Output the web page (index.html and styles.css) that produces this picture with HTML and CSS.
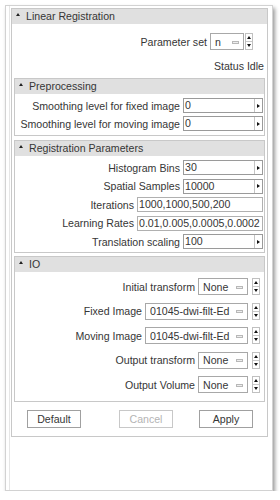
FILE: index.html
```html
<!DOCTYPE html>
<html>
<head>
<meta charset="utf-8">
<link rel="stylesheet" href="styles.css">
</head>
<body>
<div class="window">
  <div class="frame">
    <div class="head"><span class="caret"></span>Linear Registration</div>
    <div class="frame-body">
      <div class="param-row">
        <span class="label">Parameter set</span>
        <div class="combo combo-n"><span class="ctext">n</span><span class="dash"></span></div>
        <div class="spin"><span class="up"></span><span class="down"></span></div>
      </div>
      <div class="status">Status Idle</div>

      <div class="section">
        <div class="head"><span class="caret"></span>Preprocessing</div>
        <div class="sbody pre">
          <div class="row"><span class="label">Smoothing level for fixed image</span><div class="field"><span class="ftext">0</span><span class="fbtn"><i></i></span></div></div>
          <div class="row"><span class="label">Smoothing level for moving image</span><div class="field"><span class="ftext">0</span><span class="fbtn"><i></i></span></div></div>
        </div>
      </div>

      <div class="section reg-sec">
        <div class="head"><span class="caret"></span>Registration Parameters</div>
        <div class="sbody reg">
          <div class="row"><span class="label">Histogram Bins</span><div class="field"><span class="ftext">30</span><span class="fbtn"><i></i></span></div></div>
          <div class="row"><span class="label">Spatial Samples</span><div class="field"><span class="ftext">10000</span><span class="fbtn"><i></i></span></div></div>
          <div class="row"><span class="label">Iterations</span><div class="field field-wide"><span class="ftext">1000,1000,500,200</span></div></div>
          <div class="row"><span class="label">Learning Rates</span><div class="field field-wide"><span class="ftext">0.01,0.005,0.0005,0.0002</span></div></div>
          <div class="row"><span class="label">Translation scaling</span><div class="field"><span class="ftext">100</span><span class="fbtn"><i></i></span></div></div>
        </div>
      </div>

      <div class="section io-sec">
        <div class="head"><span class="caret"></span>IO</div>
        <div class="sbody io">
          <div class="row"><span class="label">Initial transform</span><div class="combo combo-none"><span class="ctext">None</span><span class="dash"></span></div><div class="spin"><span class="up"></span><span class="down"></span></div></div>
          <div class="row"><span class="label">Fixed Image</span><div class="combo combo-file"><span class="ctext">01045-dwi-filt-Ed</span><span class="dash"></span></div><div class="spin"><span class="up"></span><span class="down"></span></div></div>
          <div class="row"><span class="label">Moving Image</span><div class="combo combo-file"><span class="ctext">01045-dwi-filt-Ed</span><span class="dash"></span></div><div class="spin"><span class="up"></span><span class="down"></span></div></div>
          <div class="row"><span class="label">Output transform</span><div class="combo combo-none"><span class="ctext">None</span><span class="dash"></span></div><div class="spin"><span class="up"></span><span class="down"></span></div></div>
          <div class="row"><span class="label">Output Volume</span><div class="combo combo-none"><span class="ctext">None</span><span class="dash"></span></div><div class="spin"><span class="up"></span><span class="down"></span></div></div>
        </div>
      </div>

      <div class="buttons">
        <button class="btn">Default</button>
        <button class="btn cancel" disabled>Cancel</button>
        <button class="btn apply">Apply</button>
      </div>
    </div>
  </div>
</div>
</body>
</html>
```

FILE: styles.css
```css
html, body {
  margin: 0;
  padding: 0;
  background: #ffffff;
}
body {
  font-family: "Liberation Sans", Arial, sans-serif;
  font-size: 10.6px;
  color: #363636;
}
.window {
  box-sizing: border-box;
  margin: 5px 0 0 5px;
  width: 268px;
  height: 486px;
  border: 1px solid #d2d2d2;
  padding: 2px 4px 0 5px;
  background: #fff;
  box-shadow: 2px 3px 4px rgba(0, 0, 0, 0.4), inset 3px 0 0 #fff, inset 4px 0 0 #e6e6e6;
}
.frame {
  border: 1px solid #c8c8c8;
  background: #fff;
}
.head {
  height: 15px;
  line-height: 15px;
  background: #e0e0e0;
  display: flex;
  align-items: center;
  white-space: nowrap;
}
.caret {
  width: 0;
  height: 0;
  border-left: 2.5px solid transparent;
  border-right: 2.5px solid transparent;
  border-bottom: 3px solid #222;
  margin: 0 6px 4px 4px;
}
.frame-body {
  padding: 9px 2px 8px 2px;
}
.param-row {
  display: flex;
  justify-content: flex-end;
  align-items: center;
  height: 17px;
  margin-right: 12px;
}
.param-row .label {
  margin-right: 3px;
}
.status {
  text-align: right;
  height: 12px;
  line-height: 12px;
  margin-top: 10px;
  padding-right: 1px;
}
.section {
  border: 1px solid #c8c8c8;
  margin-top: 6px;
}
.reg-sec {
  margin-top: 4px;
}
.io-sec {
  margin-top: 3px;
}
.sbody {
  display: flex;
  flex-direction: column;
  padding-right: 1px;
}
.pre {
  padding-top: 4px;
  padding-bottom: 4px;
  gap: 3px;
}
.reg {
  padding-top: 4px;
  padding-bottom: 3px;
  gap: 3.5px;
}
.io {
  padding-top: 6px;
  padding-bottom: 8px;
  gap: 7.5px;
  padding-right: 4px;
}
.row {
  display: flex;
  justify-content: flex-end;
  align-items: center;
  white-space: nowrap;
}
.row .label {
  margin-right: 3px;
}
.field {
  box-sizing: border-box;
  width: 80px;
  height: 15px;
  border: 1px solid #9a9a9a;
  display: flex;
  align-items: stretch;
  background: #fff;
}
.field-wide {
  width: 126px;
  border-color: #b0b0b0;
}
.ftext {
  flex: 1;
  line-height: 13px;
  padding-left: 1px;
  overflow: hidden;
  white-space: nowrap;
}
.fbtn {
  width: 7px;
  border-left: 1px solid #c4c4c4;
  display: flex;
  align-items: center;
  justify-content: center;
}
.fbtn i {
  width: 0;
  height: 0;
  border-top: 2.5px solid transparent;
  border-bottom: 2.5px solid transparent;
  border-left: 3px solid #111;
}
.combo {
  box-sizing: border-box;
  height: 17px;
  border: 1px solid #a8a8a8;
  display: flex;
  align-items: center;
  padding: 0 4px 0 4px;
}
.combo-n {
  width: 34px;
}
.combo-none {
  width: 50px;
}
.combo-file {
  width: 103px;
}
.ctext {
  flex: 1;
  overflow: hidden;
  white-space: nowrap;
}
.dash {
  box-sizing: border-box;
  width: 7px;
  height: 3px;
  border: 1px solid #b8b8b8;
  background: #eee;
  margin-top: 1px;
}
.spin {
  box-sizing: border-box;
  width: 8px;
  height: 17px;
  border: 1px solid #c0c0c0;
  display: flex;
  flex-direction: column;
  margin-left: 1px;
}
.io .spin {
  margin-left: 4px;
}
.spin .up, .spin .down {
  flex: 1;
  display: flex;
  align-items: center;
  justify-content: center;
}
.spin .up {
  border-bottom: 1px solid #c8c8c8;
}
.spin .up::before {
  content: "";
  width: 0;
  height: 0;
  border-left: 2px solid transparent;
  border-right: 2px solid transparent;
  border-bottom: 3px solid #111;
}
.spin .down::before {
  content: "";
  width: 0;
  height: 0;
  border-left: 2px solid transparent;
  border-right: 2px solid transparent;
  border-top: 3px solid #111;
}
.buttons {
  display: flex;
  margin-top: 8px;
  padding-left: 13px;
}
.btn {
  box-sizing: border-box;
  width: 54px;
  height: 18px;
  border: 1px solid #a0a0a0;
  background: #fff;
  font-family: "Liberation Sans", Arial, sans-serif;
  font-size: 10.6px;
  color: #363636;
  padding: 0;
  border-radius: 0;
}
.cancel {
  margin-left: 38px;
  color: #b4b4b4;
  border-color: #c8c8c8;
}
.apply {
  margin-left: 26px;
}
```
